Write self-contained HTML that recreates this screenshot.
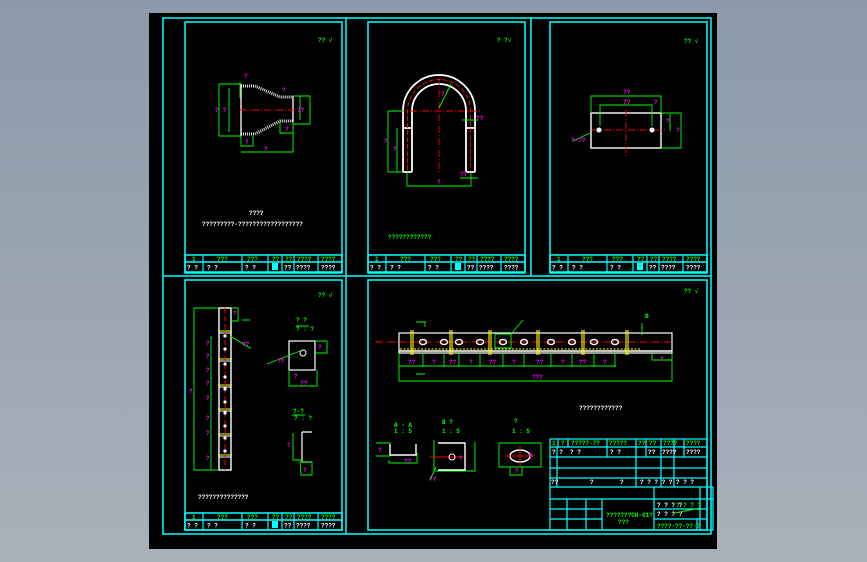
<!DOCTYPE html>
<html><head><meta charset="utf-8"><style>
html,body{margin:0;padding:0;width:867px;height:562px;overflow:hidden;background:linear-gradient(#8c99aa,#a9b1ba);}
svg{position:absolute;left:0;top:0}
text{font-family:"Liberation Mono",monospace;font-size:6px;font-weight:bold}
</style></head><body>
<svg width="867" height="562" viewBox="0 0 867 562">
<defs>
<g id="tb">
<rect x="0" y="0" width="157" height="17" fill="none" stroke="#0ff" stroke-width="1.5"/>
<line x1="0" y1="7" x2="157" y2="7" stroke="#0ff" stroke-width="1.5"/>
<g stroke="#0ff" stroke-width="1.2"><line x1="18" y1="0" x2="18" y2="17"/><line x1="57" y1="0" x2="57" y2="17"/><line x1="83" y1="0" x2="83" y2="17"/><line x1="97" y1="0" x2="97" y2="17"/><line x1="109" y1="0" x2="109" y2="17"/><line x1="133" y1="0" x2="133" y2="17"/></g>
<g fill="#0f0" font-size="6"><text x="7" y="6">1</text><text x="32" y="6">???</text><text x="62" y="6">???</text><text x="87" y="6">??</text><text x="100" y="6">??</text><text x="112" y="6">????</text><text x="136" y="6">????</text></g>
<g fill="#fff" font-size="7"><text x="2" y="14.5">? ?</text><text x="22" y="14.5">?      ?</text><text x="60" y="14.5">?   ?</text><text x="99" y="14.5">??</text><text x="111" y="14.5">????</text><text x="136" y="14.5">????</text></g>
<rect x="87" y="8" width="6" height="7" fill="#0ff"/>
</g>
</defs>
<rect x="149" y="13" width="568" height="536" fill="#000"/>
<g fill="none" stroke="#0ff" stroke-width="1.5">
<rect x="163" y="18" width="548" height="516"/>
<line x1="346" y1="18" x2="346" y2="534"/>
<line x1="531" y1="18" x2="531" y2="276"/>
<line x1="163" y1="276" x2="711" y2="276"/>
<rect x="185" y="22" width="157" height="251"/>
<rect x="368" y="22" width="157" height="251"/>
<rect x="550" y="22" width="157" height="251"/>
<rect x="185" y="280" width="157" height="250"/>
<rect x="368" y="280" width="339" height="250"/>
</g>
<use href="#tb" x="185" y="255"/>
<use href="#tb" x="368" y="255"/>
<use href="#tb" x="550" y="255"/>
<use href="#tb" x="185" y="513"/>
<g fill="#0f0" font-size="7"><text x="318" y="42">?? √</text><text x="497" y="42">? ?√</text><text x="684" y="43">?? √</text><text x="318" y="297">?? √</text><text x="684" y="293">?? √</text></g>
<!-- P1 reducer -->
<g fill="none" stroke="#ddd" stroke-width="3" stroke-dasharray="1 1">
<path d="M241 86 L255 86 L280 97 L293 97"/><path d="M241 134 L255 134 L280 121 L293 121"/>
</g>
<g fill="none" stroke="#fff" stroke-width="1.3">
<path d="M241 84 L241 136"/><path d="M293 96 L293 122"/>
</g>
<g fill="none" stroke="#0f0" stroke-width="0.9">
<path d="M219 84 L241 84 M219 136 L241 136 M219 84 L219 136 M229 88 L229 132 M240 82 L240 98"/>
<path d="M293 96 L310 96 L310 124 L293 124 M300 96 L300 120"/>
<path d="M241 136 L241 146 L253 146 L253 136 M241 152 L293 152 L293 122 M280 122 L280 133 L293 133"/>
</g>
<line x1="240" y1="110" x2="295" y2="110" stroke="#f00" stroke-dasharray="7 2 1 2"/>
<g fill="#f0f" font-size="6"><text x="215" y="112">?</text><text x="223" y="112">?</text><text x="244" y="78">?</text><text x="282" y="92">?</text><text x="297" y="112">??</text><text x="245" y="144">?</text><text x="264" y="151">?</text><text x="285" y="131">?</text></g>
<text x="249" y="215" fill="#fff" font-size="7">????</text>
<text x="202" y="226" fill="#fff" font-size="6">?????????-??????????????????</text>
<!-- P2 U bend -->
<g fill="none" stroke="#fff" stroke-width="1.8">
<path d="M403 172 L403 111 A36 36 0 0 1 475 111 L475 172"/>
<path d="M412 172 L412 111 A27 27 0 0 1 466 111 L466 172"/>
<path d="M403 172 L412 172 M466 172 L475 172 M403 128 L412 128 M466 128 L475 128"/>
</g>
<path d="M407.5 170 L407.5 111 A31.5 31.5 0 0 1 470.5 111 L470.5 170" fill="none" stroke="#f00" stroke-width="0.9" stroke-dasharray="5 2"/>
<line x1="398" y1="111" x2="480" y2="111" stroke="#f00" stroke-width="0.9" stroke-dasharray="7 2 1 2"/>
<line x1="439" y1="78" x2="439" y2="172" stroke="#f00" stroke-width="0.9" stroke-dasharray="7 2 1 2"/>
<g fill="none" stroke="#0f0" stroke-width="0.9">
<path d="M388 111 L403 111 M388 111 L388 172 L403 172 M397 128 L397 172 M407 172 L407 186 L471 186 L471 172 M439 108 L451 84 M462 120 L478 120 M460 178 L478 178"/>
</g>
<g fill="#f0f" font-size="6"><text x="384" y="143">?</text><text x="393" y="151">?</text><text x="441" y="96">?</text><text x="476" y="120">??</text><text x="437" y="184">?</text><text x="460" y="176">??</text></g>
<text x="388" y="239" fill="#0f0" font-size="6">????????????</text>
<!-- P3 plate -->
<rect x="591" y="113" width="70" height="35" fill="none" stroke="#fff" stroke-width="1.4"/>
<line x1="592" y1="130" x2="665" y2="130" stroke="#f00" stroke-width="0.9" stroke-dasharray="7 2 1 2"/>
<line x1="626" y1="110" x2="626" y2="157" stroke="#f00" stroke-width="0.9" stroke-dasharray="7 2 1 2"/>
<circle cx="599" cy="130" r="2.5" fill="#fff"/><circle cx="652" cy="130" r="2.5" fill="#fff"/>
<g fill="none" stroke="#0f0" stroke-width="0.9"><path d="M591 113 L591 96 L661 96 L661 113 M600 126 L600 105 L652 105 L652 126 M661 113 L681 113 L681 148 L661 148 M670 114 L670 131"/><path d="M573 141 L590 133"/></g>
<g fill="#f0f" font-size="6"><text x="623" y="94">??</text><text x="623" y="104">??</text><text x="654" y="104">?</text><text x="666" y="123">?</text><text x="676" y="132">?</text><text x="571" y="142">?-??</text></g>
<!-- P4 column -->
<g fill="none" stroke="#fff" stroke-width="1.4"><rect x="219" y="308" width="12" height="162"/></g>
<g stroke="#ff0" stroke-width="1"><line x1="218" y1="331" x2="232" y2="331"/><line x1="218" y1="359" x2="232" y2="359"/><line x1="218" y1="385" x2="232" y2="385"/><line x1="218" y1="409" x2="232" y2="409"/><line x1="218" y1="434" x2="232" y2="434"/><line x1="218" y1="455" x2="232" y2="455"/></g>
<g stroke="#fff" stroke-width="1"><line x1="219" y1="333" x2="231" y2="333"/><line x1="219" y1="361" x2="231" y2="361"/><line x1="219" y1="387" x2="231" y2="387"/><line x1="219" y1="411" x2="231" y2="411"/><line x1="219" y1="436" x2="231" y2="436"/><line x1="219" y1="457" x2="231" y2="457"/></g>
<line x1="225" y1="308" x2="225" y2="470" stroke="#f00" stroke-dasharray="5 3"/>
<g fill="#fff"><circle cx="225" cy="336" r="1.6"/><circle cx="225" cy="349" r="1.6"/><circle cx="225" cy="364" r="1.6"/><circle cx="225" cy="377" r="1.6"/><circle cx="225" cy="389" r="1.6"/><circle cx="225" cy="402" r="1.6"/><circle cx="225" cy="413" r="1.6"/><circle cx="225" cy="426" r="1.6"/><circle cx="225" cy="438" r="1.6"/><circle cx="225" cy="451" r="1.6"/></g>
<g fill="none" stroke="#0f0" stroke-width="0.9"><path d="M218 308 L194 308 L194 470 L219 470 M211 336 L211 470 M231 308 L238 308 L238 321 L231 321 M242 320 L250 320 M230 336 L250 348 L251 348"/></g>
<g fill="#f0f" font-size="6"><text x="189" y="393">?</text><text x="206" y="345">?</text><text x="206" y="358">?</text><text x="206" y="372">?</text><text x="206" y="385">?</text><text x="206" y="400">?</text><text x="206" y="420">?</text><text x="206" y="435">?</text><text x="206" y="460">?</text><text x="233" y="315">?</text><text x="242" y="346">??</text></g>
<g fill="none" stroke="#fff" stroke-width="1.2"><rect x="289" y="341" width="26" height="29"/><path d="M302 432 L312 432 M302 432 L302 462 M302 462 L312 462"/></g>
<circle cx="303" cy="353" r="3" fill="none" stroke="#fff"/>
<g fill="none" stroke="#0f0" stroke-width="0.9"><path d="M289 370 L289 386 L317 386 L317 370 M315 341 L327 341 L327 353 L315 353 M267 364 L300 351 M293 433 L293 460 L302 460 M300 462 L312 462 L312 475 L301 475 Z M296 326 L309 326 M292 415 L305 415"/></g>
<g fill="#0f0" font-size="6"><text x="296" y="322">? ?</text><text x="296" y="331">? : ?</text><text x="293" y="413">?-?</text><text x="294" y="420">? : ?</text></g>
<g fill="#f0f" font-size="6"><text x="294" y="378">?</text><text x="300" y="385">??</text><text x="318" y="349">?</text><text x="277" y="363">??</text><text x="287" y="447">?</text><text x="303" y="472">?</text></g>
<text x="198" y="499" fill="#fff" font-size="6">??????????????</text>
<!-- P5 beam -->
<rect x="399" y="333" width="273" height="20" fill="none" stroke="#fff" stroke-width="1.2"/>
<line x1="399" y1="351" x2="672" y2="351" stroke="#fff" stroke-width="1.4"/>
<line x1="400" y1="349" x2="640" y2="349" stroke="#ff0" stroke-dasharray="2 1.5" stroke-width="0.9"/>
<line x1="376" y1="342" x2="673" y2="342" stroke="#f00" stroke-dasharray="7 2 1 2" stroke-width="1.1"/>
<g stroke="#ff0" stroke-width="1.1"><path d="M411 330 V355 M413 330 V355 M450 330 V355 M452 330 V355 M489 330 V355 M491 330 V355 M537 330 V355 M539 330 V355 M582 330 V355 M584 330 V355 M626 330 V355 M628 330 V355"/></g>
<g fill="none" stroke="#fff" stroke-width="1.4"><ellipse cx="423" cy="342" rx="3.5" ry="2.5"/><ellipse cx="444" cy="342" rx="3.5" ry="2.5"/><ellipse cx="459" cy="342" rx="3.5" ry="2.5"/><ellipse cx="480" cy="342" rx="3.5" ry="2.5"/><ellipse cx="503" cy="342" rx="3.5" ry="2.5"/><ellipse cx="524" cy="342" rx="3.5" ry="2.5"/><ellipse cx="551" cy="342" rx="3.5" ry="2.5"/><ellipse cx="572" cy="342" rx="3.5" ry="2.5"/><ellipse cx="594" cy="342" rx="3.5" ry="2.5"/><ellipse cx="615" cy="342" rx="3.5" ry="2.5"/></g>
<g fill="none" stroke="#0f0" stroke-width="0.9"><path d="M399 353 V381 H672 V353 M399 366 H616 M423 353 V367 M444 353 V367 M459 353 V367 M480 353 V367 M503 353 V367 M524 353 V367 M551 353 V367 M572 353 V367 M594 353 V367 M615 353 V367 M652 353 V360 H672 M495 334 H511 V348 H495 Z M511 334 L523 320"/><path d="M416 322 H425 M425 321 V327 M416 374 H425 M642 323 V335"/></g>
<g fill="#f0f" font-size="6"><text x="408" y="364">??</text><text x="432" y="364">?</text><text x="449" y="364">??</text><text x="469" y="364">?</text><text x="489" y="364">??</text><text x="512" y="364">?</text><text x="536" y="364">??</text><text x="561" y="364">?</text><text x="579" y="364">??</text><text x="603" y="364">?</text><text x="660" y="361">?</text><text x="532" y="379">???</text></g>
<text x="579" y="410" fill="#fff" font-size="6">????????????</text>
<g fill="#0f0" font-size="6"><text x="394" y="427">A - A</text><text x="394" y="433">1 : 5</text><text x="442" y="424">B ?</text><text x="442" y="433">1 : 5</text><text x="514" y="423">?</text><text x="512" y="433">1 : 5</text><text x="645" y="318">B</text></g>
<g fill="none" stroke="#0f0" stroke-width="0.9"><path d="M376 443 H390 V456 H376 M389 460 V463 H417 V453 M434 440 V470 M436 467 L430 480 M475 442 V471 H435 M499 443 V467 H541 V443 Z M510 467 V475 H522 V467"/></g>
<g fill="none" stroke="#fff" stroke-width="1.4"><path d="M390 444 V455 H416 V444"/><path d="M438 443 H465 V470 H438"/><ellipse cx="520" cy="456" rx="10" ry="6"/></g>
<line x1="430" y1="457" x2="462" y2="457" stroke="#f00" stroke-width="0.9"/>
<circle cx="452" cy="457" r="3" fill="none" stroke="#fff"/>
<line x1="505" y1="456" x2="535" y2="456" stroke="#f00" stroke-width="0.9"/><line x1="520" y1="446" x2="520" y2="466" stroke="#f00" stroke-width="0.9"/>
<g fill="#f0f" font-size="6"><text x="404" y="463">??</text><text x="459" y="460">?</text><text x="429" y="481">??</text><text x="515" y="473">?</text><text x="378" y="452">?</text><text x="529" y="458">?</text></g>
<g fill="none" stroke="#0ff" stroke-width="1.2">
<rect x="550" y="439" width="157" height="91"/>
<path d="M550 447 H707 M550 457 H707 M550 468 H707 M550 478 H707 M550 487 H713 M550 499 H713 M713 487 V530 H707"/>
<path d="M558 439 V447 M568 439 V447 M607 439 V457 M636 439 V487 M646 439 V457 M661 439 V487 M674 439 V487 M684 439 V457 M557 447 V487 M654 487 V530 M567 499 V530 M586 499 V530 M602 499 V530 M550 509 H602 M550 519 H602 M654 509 H707 M654 519 H707 M700 487 V530 M697 519 V530"/>
</g>
<g fill="#0f0" font-size="6"><text x="552" y="445">1</text><text x="561" y="445">?</text><text x="571" y="445">?????-??</text><text x="609" y="445">?????</text><text x="638" y="445">??</text><text x="649" y="445">??</text><text x="663" y="445">????</text><text x="686" y="445">????</text>
<text x="606" y="517">???????CH-01?</text><text x="618" y="524">???</text><text x="657" y="528">????-??-??-?</text><text x="676" y="507">? ? ? ?</text></g>
<g fill="#fff" font-size="7"><text x="552" y="454">? ?</text><text x="570" y="454">?     ?</text><text x="610" y="454">?   ?</text><text x="648" y="454">??</text><text x="662" y="454">????</text><text x="686" y="454">????</text>
<text x="551" y="484">??</text><text x="590" y="484">?</text><text x="620" y="484">?</text><text x="640" y="484">? ? ? ? ? ? ? ?</text><text x="657" y="507">? ? ? ?</text><text x="657" y="516">? ? ? ?</text></g>
<path d="M675 513 L700 508" stroke="#0f0" fill="none"/>
</svg>
</body></html>
